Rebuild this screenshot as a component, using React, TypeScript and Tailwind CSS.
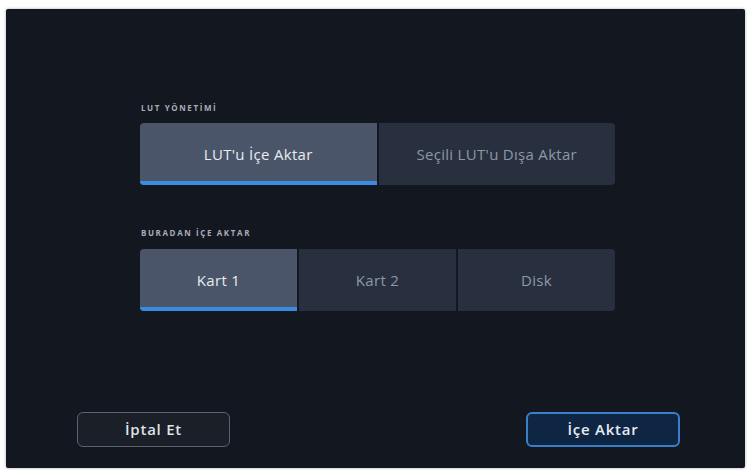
const font = { fontFamily: '"Open Sans", "Noto Sans", sans-serif' };

type Option = { label: string; selected?: boolean };

const SectionLabel = ({ text }: { text: string }) => (
  <div className="h-[10px] text-[8px] leading-[10px] font-bold tracking-[0.2em] text-[#a7adb7] pl-[1px]">
    {text}
  </div>
);

const Segmented = ({ options }: { options: Option[] }) => (
  <div className="flex gap-[2px] w-[475px] h-[62px]">
    {options.map((o, i) => (
      <div
        key={o.label}
        className={`relative flex-1 flex items-center justify-center text-[15px] tracking-[0.02em] overflow-hidden ${
          o.selected ? "bg-[#4a556a] text-[#e8ebf0]" : "bg-[#283040] text-[#8e97a5]"
        } ${i === 0 ? "rounded-l-[4px]" : ""} ${i === options.length - 1 ? "rounded-r-[4px]" : ""}`}
      >
        <span>{o.label}</span>
        {o.selected && <div className="absolute left-0 right-0 bottom-0 h-[4px] bg-[#3a8ce0]" />}
      </div>
    ))}
  </div>
);

export default function App() {
  return (
    <div className="w-[754px] h-[473px] bg-white pt-[9px] pl-[6px]" style={font}>
      <div className="w-[739px] h-[459px] bg-[#13171f] rounded-[2px] shadow-[0_0_3px_rgba(0,0,0,0.35)] flex flex-col">
        <div className="pl-[134px] pt-[94px]">
          <SectionLabel text="LUT YÖNETİMİ" />
          <div className="mt-[10px]">
            <Segmented
              options={[{ label: "LUT'u İçe Aktar", selected: true }, { label: "Seçili LUT'u Dışa Aktar" }]}
            />
          </div>
          <div className="mt-[43px]">
            <SectionLabel text="BURADAN İÇE AKTAR" />
          </div>
          <div className="mt-[11px]">
            <Segmented options={[{ label: "Kart 1", selected: true }, { label: "Kart 2" }, { label: "Disk" }]} />
          </div>
        </div>
        <div className="mt-auto flex justify-between pl-[71px] pr-[65px] pb-[21px]">
          <button className="w-[153px] h-[35px] rounded-[6px] border-[1.5px] border-[#5b6370] bg-[#1a1f28] text-[15px] font-semibold tracking-[0.05em] text-[#dfe3e8]">
            İptal Et
          </button>
          <button className="w-[154px] h-[35px] rounded-[6px] border-2 border-[#3a7fc8] bg-[#0e2543] text-[15px] font-semibold tracking-[0.05em] text-[#e6ebf2]">
            İçe Aktar
          </button>
        </div>
      </div>
    </div>
  );
}
